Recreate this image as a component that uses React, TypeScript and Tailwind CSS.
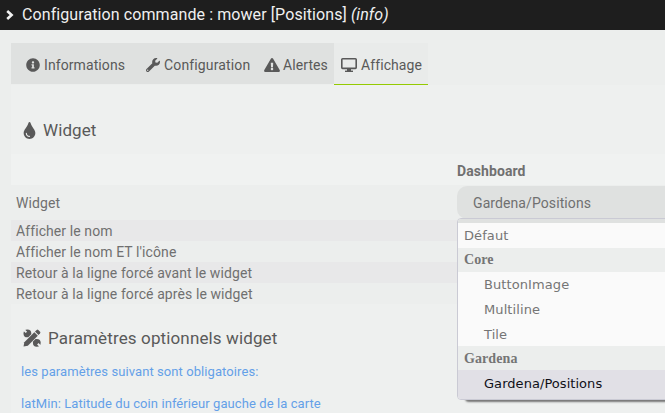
import React from "react";
import { FaInfoCircle, FaWrench, FaExclamationTriangle, FaTint } from "react-icons/fa";

const rows = [
  { label: "Afficher le nom", tone: "bg-[#e8e8e9]" },
  { label: "Afficher le nom ET l'icône", tone: "" },
  { label: "Retour à la ligne forcé avant le widget", tone: "bg-[#e8e8e9]" },
  { label: "Retour à la ligne forcé après le widget", tone: "" },
];

function Chevron() {
  return (
    <svg className="h-[10px] w-[8px]" viewBox="0 0 8 10" fill="none" stroke="#f2f2f2" strokeWidth="2.6">
      <path d="M1.2 1 5.6 5 1.2 9" />
    </svg>
  );
}

function Monitor() {
  return (
    <svg className="h-[14px] w-[16px] shrink-0" viewBox="0 0 16 14" fill="none" stroke="currentColor">
      <rect x="0.8" y="0.8" width="14.4" height="9.6" rx="0.8" strokeWidth="1.6" />
      <path d="M8 10.5V13" strokeWidth="4" />
      <path d="M4 13.3h8" strokeWidth="1.4" />
    </svg>
  );
}

function PencilWrench() {
  return (
    <svg className="size-[18px] shrink-0" viewBox="0 0 18 18">
      <path d="M4.2 4.2 13.8 13.8" stroke="currentColor" strokeWidth="4.4" />
      <circle cx="4.4" cy="4.4" r="3.9" fill="currentColor" />
      <circle cx="13.8" cy="13.8" r="3.9" fill="currentColor" />
      <path d="M0.4 0.4 3.4 3.4M14.8 14.8l3 3" stroke="#eef0ef" strokeWidth="2" />
      <path d="M2 16 16 2" stroke="#eef0ef" strokeWidth="6.4" />
      <path d="M0.5 17.6 1.3 13.3 11.3 3.3 14.8 6.8 4.8 16.8Z" fill="currentColor" />
      <path d="M12 2.6 13.7 0.9Q14.5 0.2 15.3 0.9L17.1 2.7Q17.8 3.5 17.1 4.3L15.5 6Z" fill="currentColor" />
    </svg>
  );
}

function Dropdown() {
  return (
    <div className="absolute left-0 top-[32px] w-[240px]">
      <div className="flex h-[182px] flex-col overflow-hidden rounded-[4px] border border-[#cacad4] bg-[#fafafa] font-['DejaVu_Sans',sans-serif] text-[13px] text-[#757575] shadow-[8px_2px_2px_#777]">
        <div className="h-[4px] shrink-0 bg-[#dfe1e0]" />
        <div className="h-[25px] shrink-0 pl-[6px] leading-[26px]">Défaut</div>
        <div className="h-[24px] shrink-0 bg-[#eceeed] pl-[6px] font-['Liberation_Serif',serif] text-[14px] font-bold leading-[24px]">Core</div>
        <div className="h-[25px] shrink-0 pl-[26px] leading-[26px]">ButtonImage</div>
        <div className="h-[25px] shrink-0 pl-[26px] leading-[26px]">Multiline</div>
        <div className="h-[24px] shrink-0 pl-[26px] leading-[26px]">Tile</div>
        <div className="h-[24px] shrink-0 bg-[#eceeed] pl-[6px] font-['Liberation_Serif',serif] text-[14px] font-bold leading-[25px]">Gardena</div>
        <div className="grow bg-[#e1e0e6] pl-[26px] leading-[28px] tracking-[0.05px] text-[#101018]">Gardena/Positions</div>
      </div>
    </div>
  );
}

export default function App() {
  return (
    <div className="h-[413px] w-[665px] overflow-hidden whitespace-nowrap bg-[#eceeed] font-[Roboto,sans-serif] text-[14px] tracking-[0.09px] text-[#707070]">
      <header className="flex h-[30px] items-center bg-[#1e1e1e] pl-[6px] text-[16px] text-[#f0f0f0]">
        <Chevron />
        <span className="ml-[8px]">Configuration commande : mower [Positions] <em>(info)</em></span>
      </header>
      <div className="ml-[11px] mt-[13px]">
        <nav className="flex h-[42px] text-[#595959]">
          <div className="flex h-[41px] w-[323px] items-center bg-[#dfe1e0] pl-[15px]">
            <span className="flex w-[120px] items-center gap-[4px] pt-[3px]"><FaInfoCircle className="size-[14px]" />Informations</span>
            <span className="flex w-[118px] items-center gap-[4px] pt-[3px] tracking-[0.14px]"><FaWrench className="size-[14px]" />Configuration</span>
            <span className="flex items-center gap-[3px] pt-[3px]"><FaExclamationTriangle className="h-[14px] w-[16px]" />Alertes</span>
          </div>
          <div className="flex w-[94px] items-center gap-[4px] border-b border-[#94ca02] bg-[#e9ebea] pl-[7px] pt-[3px]"><Monitor />Affichage</div>
        </nav>
        <section className="h-[69px] bg-[#eef0ef] pl-[12px] pt-[33px]">
          <h2 className="flex h-[24px] items-center text-[17px] text-[#595959]"><FaTint className="h-[17px] w-[13px]" /><span className="ml-[7px] mt-[2px]">Widget</span></h2>
        </section>
        <div className="flex h-[31px] bg-[#f0f2f1]">
          <div className="w-[446px] shrink-0" />
          <div className="pt-[7px] font-bold leading-[20px]">Dashboard</div>
        </div>
        <div className="flex h-[35px]">
          <div className="w-[446px] shrink-0 pl-[5px] pt-[8px] leading-[20px]">Widget</div>
          <div className="relative mt-px h-[33px] w-[240px] shrink-0 rounded-[10px] bg-[#dfe1e0] pl-[16px] leading-[34px]">
            Gardena/Positions
            <Dropdown />
          </div>
        </div>
        {rows.map((r) => (
          <div key={r.label} className={`h-[21px] pl-[5px] leading-[22px] ${r.tone}`}>{r.label}</div>
        ))}
        <section className="h-[109px] bg-[#eef0ef] pl-[10px] pt-[22px]">
          <h2 className="flex h-[24px] items-center pl-[2px] text-[17px] text-[#595959]"><PencilWrench /><span className="ml-[7px] mt-[2px] tracking-[0.13px]">Paramètres optionnels widget</span></h2>
          <p className="mt-[12px] text-[13px] leading-[20px] tracking-[0.08px] text-[#64a0e8]">les paramètres suivant sont obligatoires:</p>
          <p className="mt-[12px] text-[13px] leading-[20px] tracking-[0.08px] text-[#64a0e8]">latMin: Latitude du coin inférieur gauche de la carte</p>
        </section>
      </div>
    </div>
  );
}
